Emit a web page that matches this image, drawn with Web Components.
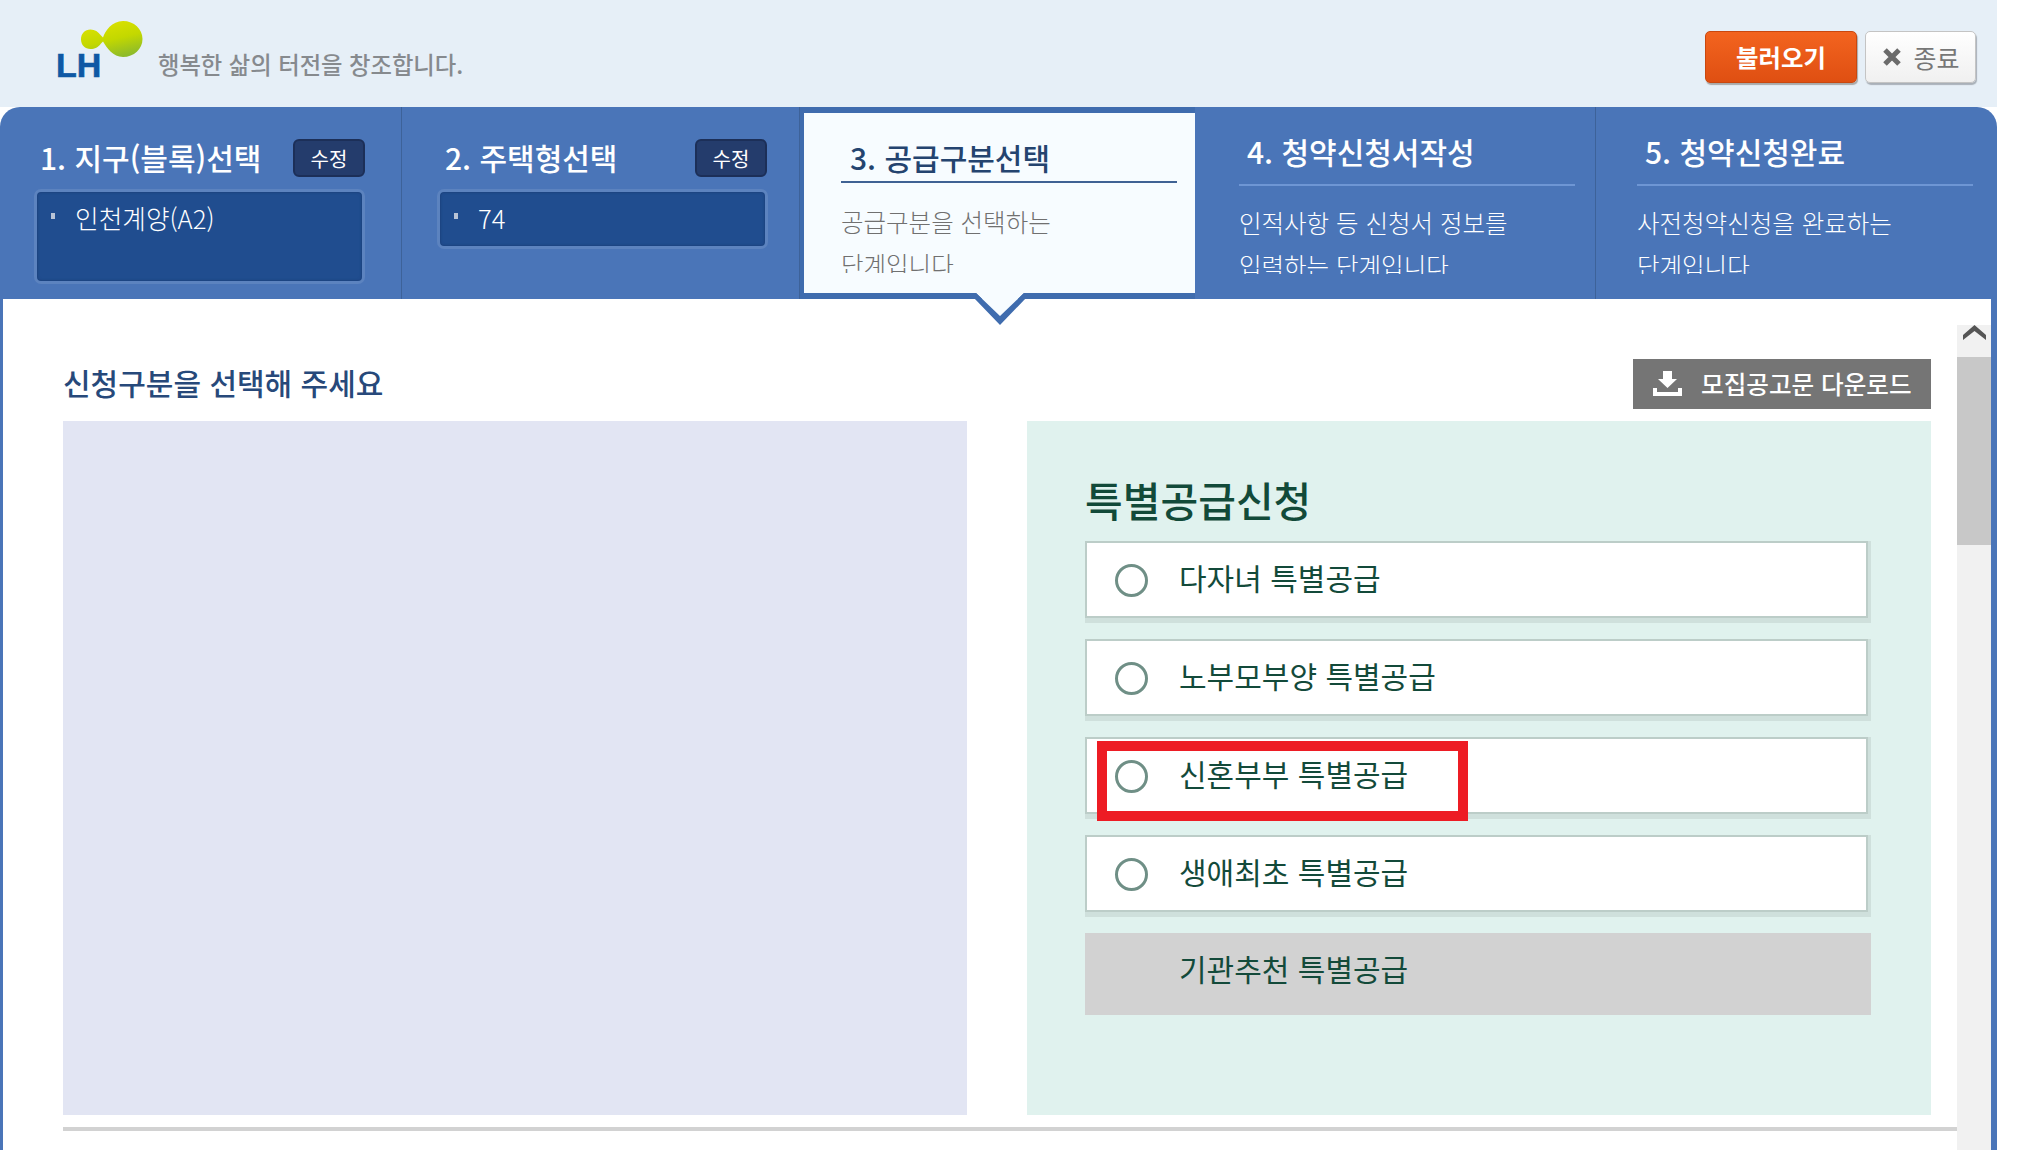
<!DOCTYPE html>
<html lang="ko"><head><meta charset="utf-8"><title>LH</title>
<style>
html,body{margin:0;background:#fff;overflow:hidden;height:1150px}
body{font-family:"Noto Sans CJK KR","Noto Sans",sans-serif}
</style></head><body>
<lh-app>
  <lh-header slot="header"></lh-header>
  <lh-steps slot="steps">
    <lh-step kind="done" num="1. 지구(블록)선택" value="인천계양(A2)" style="--w:402px;--bh:95px;--pl:34px;--tl:6px;--rw:331px"></lh-step>
    <lh-step kind="done" num="2. 주택형선택" value="74" style="--w:398px;--bh:60px;--pl:35px;--tl:8px;--rw:330px"></lh-step>
    <lh-step kind="active" num="3. 공급구분선택" desc="공급구분을 선택하는|단계입니다" style="--w:395px"></lh-step>
    <lh-step kind="todo" num="4. 청약신청서작성" desc="인적사항 등 신청서 정보를|입력하는 단계입니다" style="--w:401px;--pl:44px;--pr:20px"></lh-step>
    <lh-step kind="todo" last num="5. 청약신청완료" desc="사전청약신청을 완료하는|단계입니다" style="--w:401px;--pl:41px;--pr:24px"></lh-step>
  </lh-steps>
  <lh-content slot="content">
    <lh-option label="다자녀 특별공급"></lh-option>
    <lh-option label="노부모부양 특별공급"></lh-option>
    <lh-option label="신혼부부 특별공급" marked></lh-option>
    <lh-option label="생애최초 특별공급"></lh-option>
    <lh-option label="기관추천 특별공급" disabled></lh-option>
  </lh-content>
</lh-app>
<script>
const def=(name,html,extra={})=>{
  const t=document.createElement('template');t.innerHTML=html;
  customElements.define(name,class extends HTMLElement{
    constructor(){super();this.attachShadow({mode:'open'}).appendChild(t.content.cloneNode(true));}
    connectedCallback(){extra.init&&extra.init.call(this,this.shadowRoot);}
  });
};
def('lh-app',`<style>
:host{display:block;width:1997px;height:1150px;overflow:hidden;background:#fff}
</style><slot name="header"></slot><slot name="steps"></slot><slot name="content"></slot>`);

def('lh-header',`<style>
:host{display:flex;height:107px;background:#e6eff7;box-sizing:border-box;padding:21px 21px 0 56px;align-items:flex-start;justify-content:space-between}
.brand{display:flex;align-items:flex-start}
.logo{position:relative;width:87px;height:56px;flex:none}
.logo svg{position:absolute;left:24px;top:-1px}
.lh{position:absolute;left:0;top:26px;font:700 34px/36px "Liberation Sans",sans-serif;color:#0f58a4;-webkit-text-stroke:.6px #0f58a4}
.tag{margin:27px 0 0 15px;font-size:23.3px;line-height:32px;color:#868a8e;font-weight:500;white-space:nowrap}
.btns{display:flex;gap:8px;margin-top:10px}
.b{box-sizing:border-box;height:52px;border-radius:5px;display:flex;align-items:center;justify-content:center}
.load{width:152px;background:linear-gradient(#f3641f,#df4f12);border:1px solid #c9480f;box-shadow:1px 2px 1px #a9a9a9;color:#fff;font-size:24.4px;font-weight:700;padding-bottom:2px}
.end{width:111px;background:linear-gradient(#fff,#f0f0f0);border:1px solid #c4c4c4;box-shadow:1px 2px 1px #a9b0b8;color:#777;font-size:25px;gap:11px;padding-left:1px}
</style>
<div class="brand"><div class="logo">
<svg width="64" height="40" viewBox="0 0 64 40"><defs><linearGradient id="g" x1="0.2" y1="0" x2="0.6" y2="1"><stop offset="0" stop-color="#dfe300"/><stop offset=".55" stop-color="#c3d800"/><stop offset="1" stop-color="#8ebb2a"/></linearGradient></defs>
<path d="M10.500 9.500C15 9.500 18 11.500 21 15.500L23 17.500C25 11 32 1 43 1C54 1 62.500 9 62.500 19C62.500 29 54 37 43 37C33 37 27 28 23 21.500L21 23.500C18 27.500 15 29 10.500 29C5 29 1 25 1 19.200C1 13.500 5 9.500 10.500 9.500Z" fill="url(#g)"/></svg>
<span class="lh">LH</span></div><div class="tag">행복한 삶의 터전을 창조합니다.</div></div>
<div class="btns"><div class="b load">불러오기</div><div class="b end"><svg width="20" height="20" viewBox="0 0 20 20"><path d="M3 3L17 17M17 3L3 17" stroke="#6b6b6b" stroke-width="5"/></svg><span>종료</span></div></div>`);

def('lh-steps',`<style>
:host{display:flex;height:192px;background:#4a75b8;border-radius:20px 20px 0 0;position:relative}
</style><slot></slot>`);

def('lh-step',`<style>
:host{display:block;box-sizing:border-box;width:var(--w);height:192px;position:relative;color:#fff;border-right:1px solid #3d6299}
:host([kind=todo]){padding:24px var(--pr) 0 var(--pl)}
:host([last]){border-right:0}
:host([kind=done]){padding:32px 0 0 var(--pl)}
:host([kind=active]){background:#f7fcff;color:#24446f;border:solid #3f6cae;border-width:6px 0 6px 4px;padding:24px 18px 0 37px;height:192px}
.row{display:flex;justify-content:space-between;align-items:center;width:var(--rw);height:38px}
.row .t{padding-left:var(--tl);margin-top:-2px}
.t{font-size:30px;line-height:40px;font-weight:500;white-space:nowrap}
.badge{box-sizing:border-box;width:72px;height:38px;background:#243c6c;border:2px solid #1c2f58;border-radius:6px;font-size:20px;display:flex;align-items:center;justify-content:center}
.box{box-sizing:border-box;width:331px;height:var(--bh);margin-top:12px;background:#204d8f;border:3px solid #5c83bf;border-radius:7px;padding:11px 0 0 38px;font-size:25.7px;line-height:30px;position:relative;box-shadow:inset 0 0 3px #183a70;font-weight:300}
.box i{position:absolute;left:14px;top:21px;width:4px;height:6px;background:#b9c4d6}
.head{padding-bottom:13px;border-bottom:2px solid #6e96d4;padding-left:8px}
:host([kind=active]) .head{padding-bottom:4px;border-color:#3f6294;padding-left:9px}
.desc{margin-top:15px;height:73px;overflow:hidden;font-size:24.5px;line-height:43px;font-weight:300;white-space:nowrap}
:host([kind=active]) .desc{margin-top:17px;color:#707070}
.tail{position:absolute;left:166px;top:180px;overflow:visible}
</style><div id="r" style="display:contents"></div>`,{init(s){
  const k=this.getAttribute('kind'),n=this.getAttribute('num');
  const r=s.getElementById('r');
  if(k==='done'){
    r.innerHTML=`<div class="row"><span class="t"></span><span class="badge">수정</span></div><div class="box"><i></i><span class="v"></span></div>`;
    r.querySelector('.t').textContent=n;r.querySelector('.v').textContent=this.getAttribute('value');
  }else{
    r.innerHTML=`<div class="head"><div class="t"></div></div><div class="desc"></div>`;
    r.querySelector('.t').textContent=n;
    const d=r.querySelector('.desc');
    this.getAttribute('desc').split('|').forEach(l=>{const e=document.createElement('div');e.textContent=l;d.appendChild(e);});
    if(k==='active'){r.insertAdjacentHTML('beforeend',`<svg class="tail" width="60" height="34" viewBox="0 0 60 34"><path d="M6 0L30 23L54 0Z" fill="#f7fcff"/><path d="M0 0H6L30 23L54 0H60V5H56L30 32L4 5H0Z" fill="#3f6cae"/></svg>`);}
  }
}});

def('lh-content',`<style>
:host{display:flex;height:851px;box-sizing:border-box;width:1997px;border-left:3px solid #4a75b8;border-right:6px solid #4a75b8;background:#fff}
.main{flex:1;min-width:0;padding:60px 26px 0 60px;box-sizing:border-box}
.top{display:flex;justify-content:space-between;align-items:center;height:50px;margin-bottom:12px}
h2{margin:-4px 0 0;font-size:30px;font-weight:500;color:#27497a;line-height:40px}
.dl{box-sizing:border-box;width:298px;height:50px;background:#757575;color:#fff;display:flex;align-items:center;padding-left:20px;gap:19px;font-size:24.6px;font-weight:500;white-space:nowrap}
.dl span{margin-top:-3px}
.cols{display:flex;gap:60px;height:694px}
.left{width:904px;background:#e2e5f3}
.right{width:904px;background:#e0f2ee;box-sizing:border-box;padding:48px 60px 0 58px}
h3{margin:0 0 12px;font-size:41px;line-height:60px;font-weight:500;color:#124a39}
.list{display:flex;flex-direction:column;gap:16px}
hr{border:0;height:4px;background:#d2d2d2;margin:12px -26px 0 0}
.sb{width:34px;margin-top:26px;background:#f1f1f1;flex:none;display:flex;flex-direction:column}
.up{height:32px;display:flex;align-items:flex-start;justify-content:center}
.th{height:188px;background:#c8c8c8}
</style>
<div class="main">
<div class="top"><h2>신청구분을 선택해 주세요</h2>
<div class="dl"><svg width="29" height="26" viewBox="0 0 29 26"><path d="M10 0H19V8H24L14.500 17L5 8H10Z" fill="#fff"/><path d="M0 17H4V21H25V17H29V25H0Z" fill="#fff"/></svg><span>모집공고문 다운로드</span></div></div>
<div class="cols"><div class="left"></div>
<div class="right"><h3>특별공급신청</h3><div class="list"><slot></slot></div></div></div>
<hr></div>
<div class="sb"><div class="up"><svg width="23" height="16" viewBox="0 0 23 16"><path d="M11.500 0L23 10V15L11.500 6L0 15V10Z" fill="#555"/></svg></div><div class="th"></div></div>`);

def('lh-option',`<style>
:host{display:block;position:relative}
.w{height:82px;box-sizing:border-box;padding:0 3px 5px 0;background:#cfe0dc}
.c{box-sizing:border-box;height:77px;background:#fff;border:2px solid #bccdc8;display:flex;align-items:flex-start;padding:21px 0 0 28px}
.r{box-sizing:border-box;width:33px;height:33px;border:3px solid #6f8f86;border-radius:50%;flex:none;margin-right:31px}
.l{font-size:30px;line-height:32px;color:#134a3a;font-weight:400;margin-top:-3px;white-space:nowrap}
:host([disabled]) .w{background:#d2d2d2;padding:0;height:82px}
:host([disabled]) .c{background:#d2d2d2;border:0;height:82px;padding:22px 0 0 94px}
:host([disabled]) .r{display:none}
.mark{position:absolute;left:12px;top:4px;width:371px;height:80px;box-sizing:border-box;border:10px solid #ed1c24;pointer-events:none}
</style><div class="w"><div class="c"><span class="r"></span><span class="l"></span></div></div>`,{init(s){
  s.querySelector('.l').textContent=this.getAttribute('label');
  if(this.hasAttribute('marked')){const m=document.createElement('div');m.className='mark';s.appendChild(m);}
}});
</script>
</body></html>
